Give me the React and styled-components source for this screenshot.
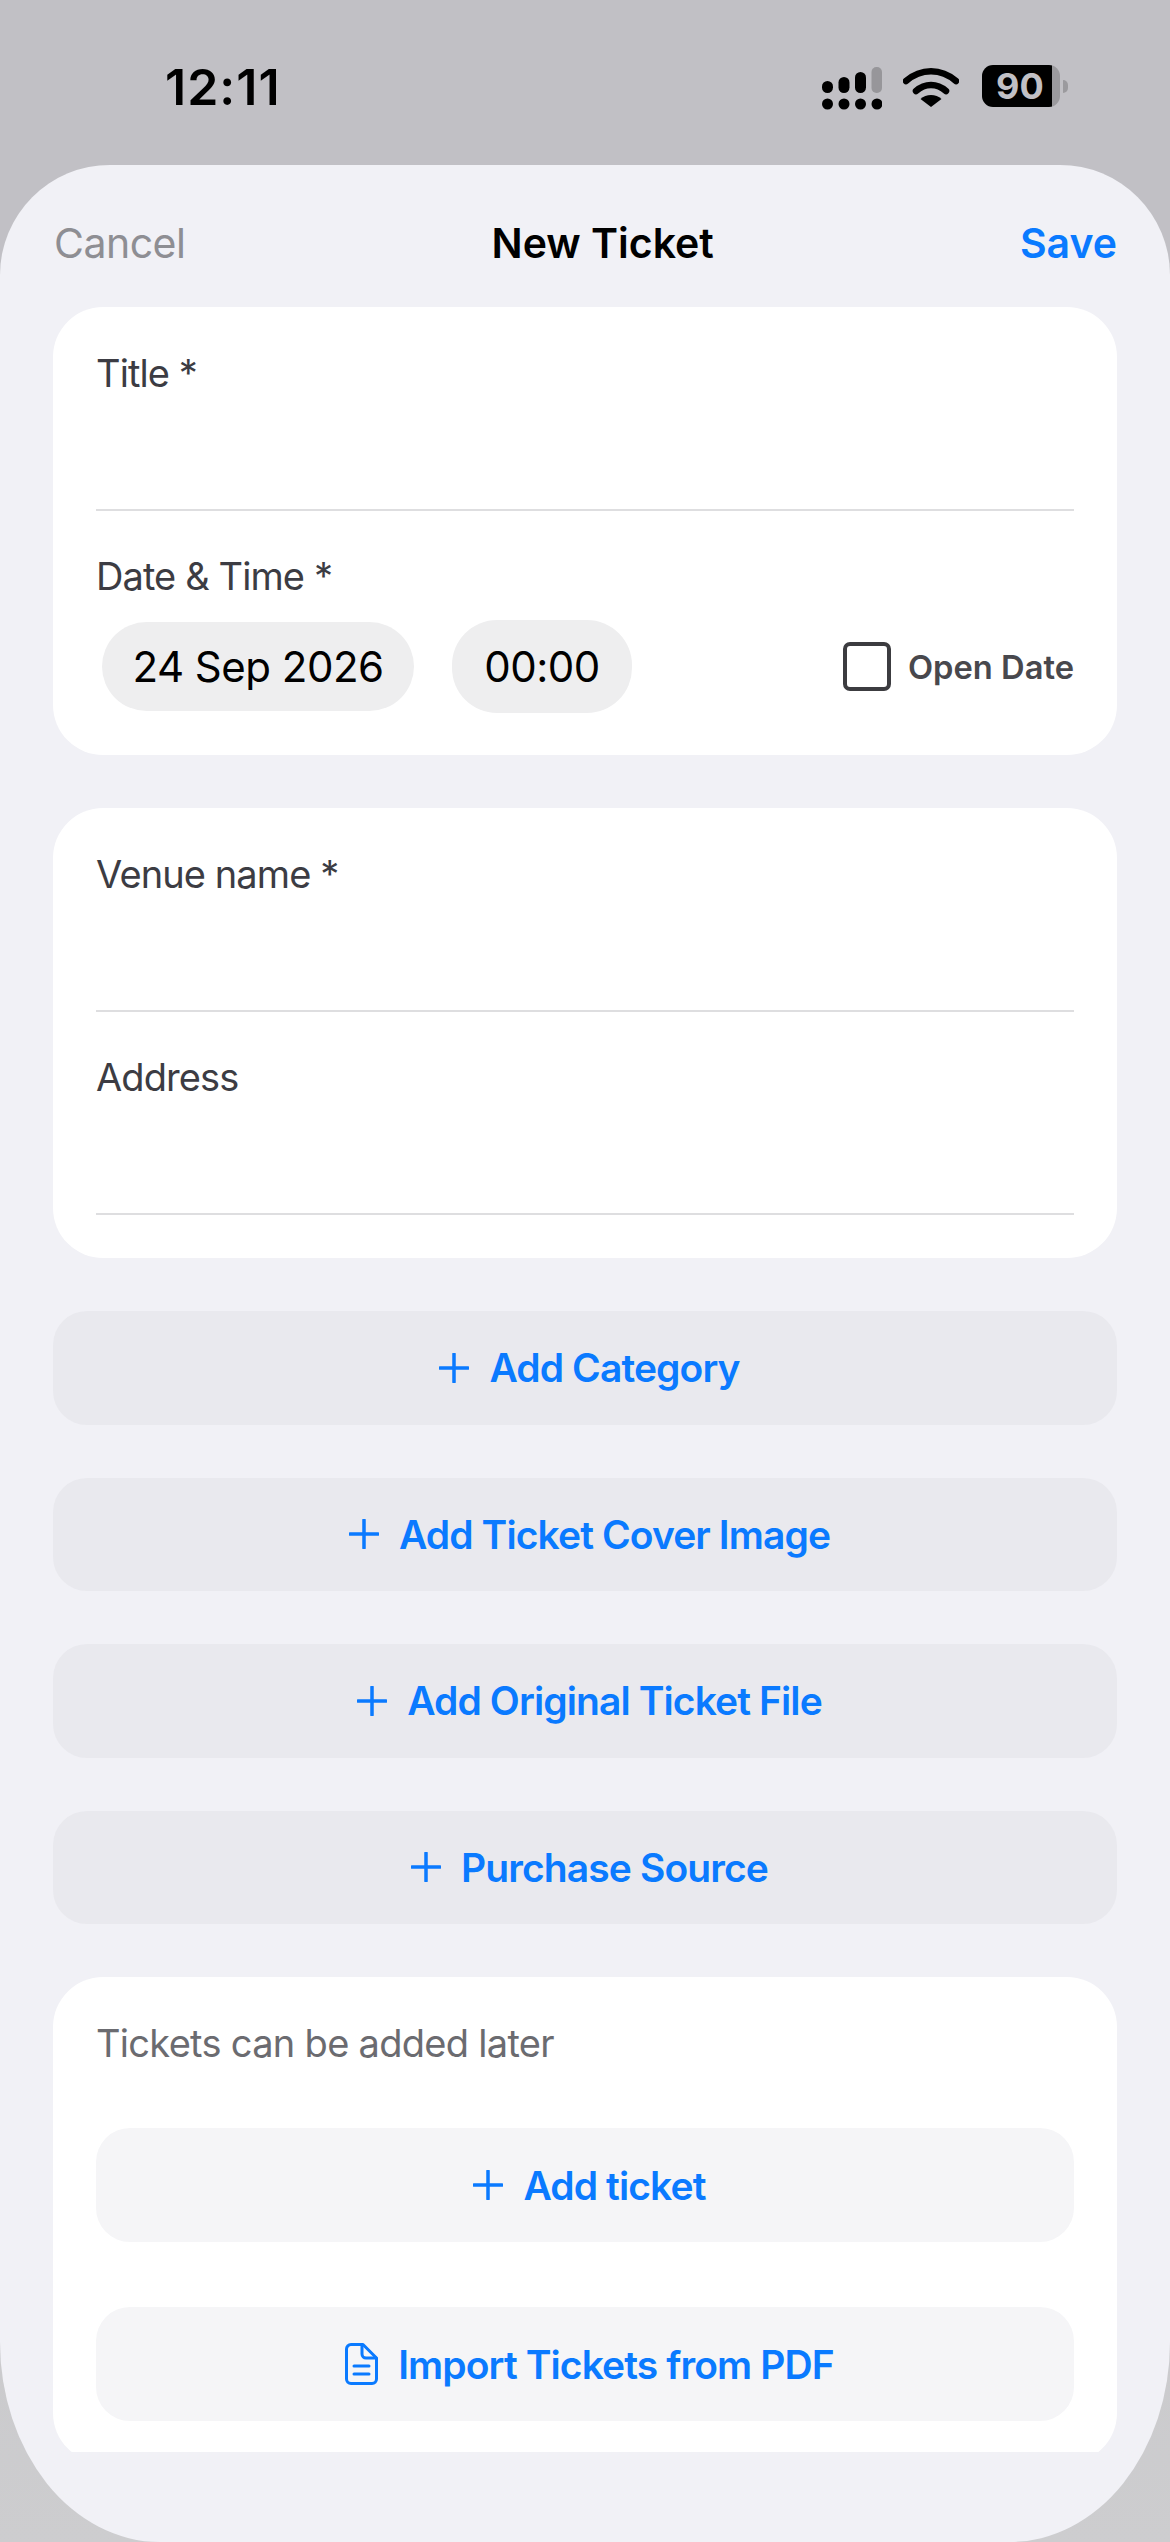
import React from "react";
import styled, { createGlobalStyle } from "styled-components";

const GlobalStyle = createGlobalStyle`
  html, body {
    margin: 0;
    padding: 0;
    background: #c4c3c8;
  }
  * {
    box-sizing: border-box;
  }
`;

const Screen = styled.div`
  width: 1170px;
  height: 2542px;
  overflow: hidden;
  background: linear-gradient(#c1c0c5, #c1c0c5 60%, #cdcdcf);
  font-family: Inter, "Liberation Sans", sans-serif;
  display: flex;
  flex-direction: column;
`;

const StatusBar = styled.div`
  height: 165px;
  flex: none;
  display: flex;
  justify-content: space-between;
  align-items: flex-start;
  padding: 56px 110px 0 165px;
`;

const Clock = styled.div`
  font-size: 50px;
  line-height: 60px;
  font-weight: 600;
  color: #000;
  letter-spacing: 1px;
  margin-top: 1px;
`;

const StatusIcons = styled.div`
  display: flex;
  align-items: flex-start;
  gap: 21px;
  margin-top: 10px;
`;

const Battery = styled.div`
  position: relative;
  width: 78px;
  height: 42px;
  margin: -1px 0 0 2px;
  border-radius: 11px;
  background: linear-gradient(90deg, #000 0, #000 70px, #9b9a9e 70px);
  color: #c1c0c5;
  font-size: 36px;
  font-weight: 700;
  line-height: 42px;
  padding-left: 14px;
  letter-spacing: 0;

  &::after {
    content: "";
    position: absolute;
    left: 81px;
    top: 15px;
    width: 5px;
    height: 13px;
    border-radius: 0 5px 5px 0;
    background: #9b9a9e;
  }
`;

const Sheet = styled.div`
  flex: 1;
  background: #f1f1f6;
  border-radius: 110px 110px 160px 160px / 110px 110px 200px 200px;
  display: flex;
  flex-direction: column;
`;

const NavBar = styled.div`
  height: 142px;
  flex: none;
  display: flex;
  justify-content: space-between;
  align-items: center;
  padding: 14px 53px 0 54px;
  font-size: 41px;
`;

const NavAction = styled.div`
  color: ${(p) => (p.$primary ? "#0a7aff" : "#8e8e93")};
  font-weight: ${(p) => (p.$primary ? 600 : 400)};
  letter-spacing: ${(p) => (p.$primary ? 0 : -0.5)}px;
`;

const NavTitle = styled.div`
  color: #000;
  font-weight: 600;
`;

const Scroller = styled.div`
  height: 2145px;
  flex: none;
  overflow: hidden;
  padding: 0 53px;
  display: flex;
  flex-direction: column;
  gap: 53px;
`;

const Card = styled.section`
  flex: none;
  background: #fff;
  border-radius: 50px;
  padding: 39px 43px 0;
  height: ${(p) => p.$height}px;
`;

const Field = styled.div`
  height: 165px;
  border-bottom: 2px solid #dedee0;
  margin-bottom: 38px;
`;

const Label = styled.div`
  color: #3c3c43;
  font-size: 38px;
  line-height: 54px;
  letter-spacing: -0.9px;
`;

const DateRow = styled.div`
  display: flex;
  align-items: center;
  margin-top: 17px;
  padding-left: 6px;
`;

const Pill = styled.div`
  height: ${(p) => p.$height}px;
  width: ${(p) => p.$width}px;
  margin-right: 38px;
  border-radius: 45px;
  background: #eeeeef;
  color: #000;
  font-size: 42px;
  letter-spacing: -0.5px;
  display: flex;
  align-items: center;
  justify-content: center;
`;

const OpenDate = styled.div`
  margin-left: auto;
  display: flex;
  align-items: center;
  gap: 17px;
  color: #48484d;
  font-size: 32.7px;
  font-weight: 600;
`;

const Checkbox = styled.div`
  width: 48px;
  height: 49px;
  border: 4px solid #3c3c40;
  border-radius: 7px;
  background: #fff;
`;

const ActionButton = styled.div`
  flex: none;
  height: ${(p) => (p.$inner ? 114 : 113.5)}px;
  border-radius: 34px;
  background: ${(p) => (p.$inner ? "#f5f5f7" : "#e9e9ee")};
  color: #0a7aff;
  font-size: 39px;
  font-weight: 600;
  letter-spacing: -0.9px;
  display: flex;
  align-items: center;
  justify-content: center;
  gap: 20px;
  padding-left: 9px;
  margin-bottom: ${(p) => (p.$inner ? 65 : 0)}px;
`;

const Hint = styled.div`
  color: #6b6b70;
  font-size: 38px;
  line-height: 54px;
  letter-spacing: -0.7px;
  margin-bottom: 58px;
`;

function SignalIcon() {
  return (
    <svg width="60" height="50" viewBox="0 0 60 50">
      <g fill="#000">
        <rect x="0" y="15" width="11" height="12" rx="5.5" />
        <rect x="16.5" y="11" width="11" height="16" rx="5.5" />
        <rect x="33" y="6" width="11" height="21" rx="5.5" />
        <circle cx="5.5" cy="38" r="5.5" />
        <circle cx="22" cy="38" r="5.5" />
        <circle cx="38.5" cy="38" r="5.5" />
        <circle cx="55" cy="38" r="5.5" />
      </g>
      <rect x="49.5" y="1" width="10.5" height="26" rx="5" fill="#97969a" />
    </svg>
  );
}

function WifiIcon() {
  return (
    <svg width="56" height="42" viewBox="0 0 56 42" fill="none">
      <path d="M3 15C18 2 38 2 53 15" stroke="#000" strokeWidth="6.5" strokeLinecap="round" />
      <path d="M13 25C22 17 34 17 43 25" stroke="#000" strokeWidth="6.5" strokeLinecap="round" />
      <path d="M28 41L17.500 33C23 27.500 33 27.500 38.500 33Z" fill="#000" />
    </svg>
  );
}

function PlusIcon() {
  return (
    <svg width="30" height="30" viewBox="0 0 30 30" fill="none">
      <path d="M15 1V29M1 15H29" stroke="#0a7aff" strokeWidth="3.5" strokeLinecap="round" />
    </svg>
  );
}

function FileIcon() {
  return (
    <svg width="33" height="42" viewBox="0 0 33 42" fill="none" stroke="#0a7aff" strokeWidth="3" strokeLinecap="round" strokeLinejoin="round">
      <path d="M6 1.500H18L31.500 15V36A4.500 4.500 0 0 1 27 40.500H6A4.500 4.500 0 0 1 1.500 36V6A4.500 4.500 0 0 1 6 1.500Z" />
      <path d="M17 2V11A4 4 0 0 0 21 15H31" />
      <path d="M9 23H24M9 31H24" />
    </svg>
  );
}

export default function App() {
  return (
    <Screen>
      <GlobalStyle />
      <StatusBar>
        <Clock>12:11</Clock>
        <StatusIcons>
          <SignalIcon />
          <WifiIcon />
          <Battery>90</Battery>
        </StatusIcons>
      </StatusBar>
      <Sheet>
        <NavBar>
          <NavAction>Cancel</NavAction>
          <NavTitle>New Ticket</NavTitle>
          <NavAction $primary>Save</NavAction>
        </NavBar>
        <Scroller>
          <Card $height={448}>
            <Field>
              <Label>Title *</Label>
            </Field>
            <Label>Date &amp; Time *</Label>
            <DateRow>
              <Pill $width={312} $height={89}>24 Sep 2026</Pill>
              <Pill $width={180} $height={93}>00:00</Pill>
              <OpenDate>
                <Checkbox />
                Open Date
              </OpenDate>
            </DateRow>
          </Card>
          <Card $height={450}>
            <Field>
              <Label>Venue name *</Label>
            </Field>
            <Field>
              <Label>Address</Label>
            </Field>
          </Card>
          <ActionButton>
            <PlusIcon />
            Add Category
          </ActionButton>
          <ActionButton>
            <PlusIcon />
            Add Ticket Cover Image
          </ActionButton>
          <ActionButton>
            <PlusIcon />
            Add Original Ticket File
          </ActionButton>
          <ActionButton>
            <PlusIcon />
            Purchase Source
          </ActionButton>
          <Card $height={486}>
            <Hint>Tickets can be added later</Hint>
            <ActionButton $inner>
              <PlusIcon />
              Add ticket
            </ActionButton>
            <ActionButton $inner>
              <FileIcon />
              Import Tickets from PDF
            </ActionButton>
          </Card>
        </Scroller>
      </Sheet>
    </Screen>
  );
}
